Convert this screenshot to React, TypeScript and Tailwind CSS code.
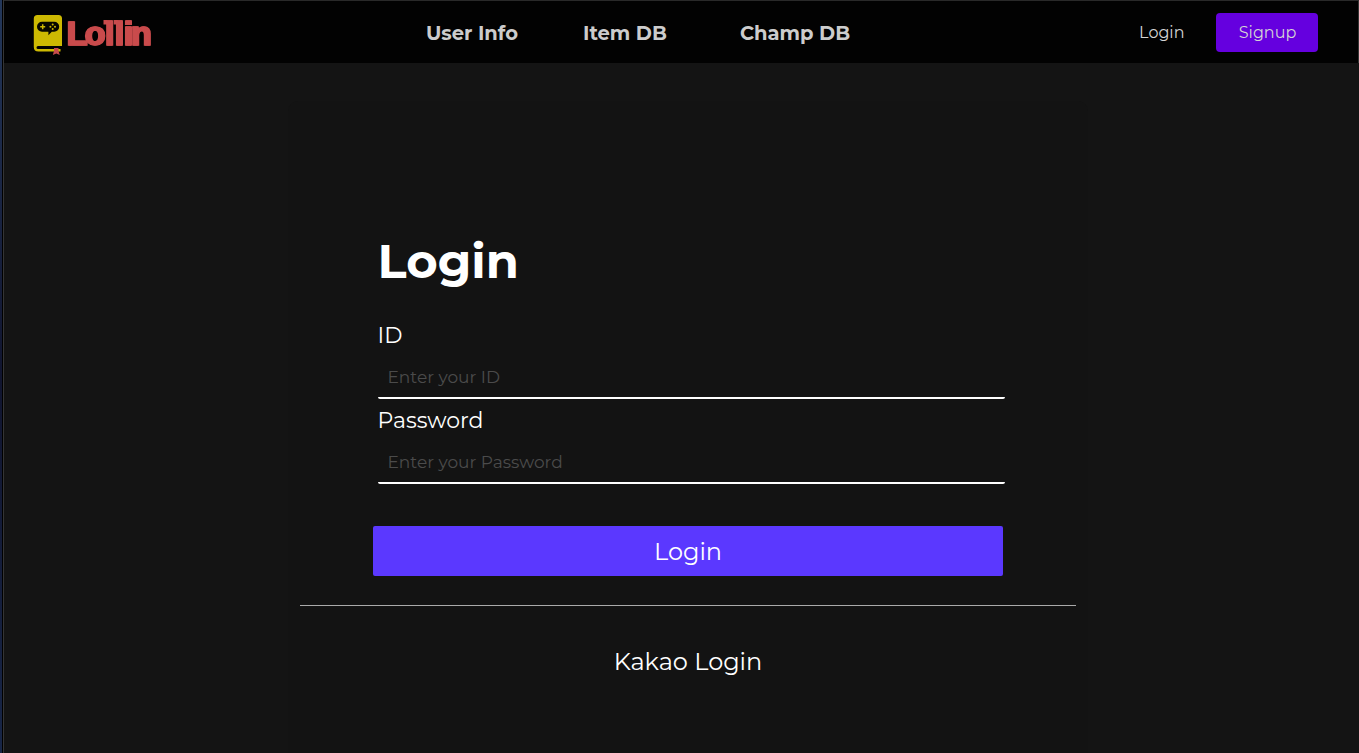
import type { ReactNode } from "react";

function Logo() {
  return (
    <svg width="124" height="46" viewBox="30 11 124 46" role="img" aria-label="Lollin" className="mt-[3px]">
      <path
        fill="#cdb902"
        d="M37.500 15H58.500q3.500 0 3.500 3.500V46H38q-1.500 0-1.500 1.500T38 49H60.500v2.600H38.500q-4.700 0-4.700-4.600V18.500q0-3.500 3.700-3.500Z"
      />
      <path
        fill="#080800"
        d="M42 21.800h12.200a5 5 0 0 1 0 10h-2.400l-3.400 3.400v-3.400H42a5 5 0 0 1 0-10Z"
      />
      <path stroke="#cdb902" strokeWidth="1.500" d="M40.200 26.800h5M42.700 24.300v5" />
      <g fill="#cdb902">
        <circle cx="52.700" cy="24.500" r="1" />
        <circle cx="52.700" cy="29.100" r="1" />
        <circle cx="50.400" cy="26.800" r="1" />
        <circle cx="55" cy="26.800" r="1" />
      </g>
      <path fill="#c94b4c" d="M54 48h4.500v3l1.300 4-3.500-1.500-3.500 1.500 1.200-4Z" />
      <g
        fill="#c94b4c"
        stroke="#c94b4c"
        strokeWidth="1.400"
        strokeLinejoin="miter"
        className="font-['Liberation_Sans_Narrow','Liberation_Sans',sans-serif] font-bold [filter:drop-shadow(1.2px_0_0_#c94b4c)]"
        transform="translate(0 45)"
      >
        <text fontSize="34" x="66.300 84.200 104.600 114.200 123.200 130.500">Lollin</text>
      </g>
      <path fill="#c94b4c" d="M103.500 20h4v4.500h-4ZM113.700 20h4v4.500h-4Z" />
    </svg>
  );
}

function Field({ label, type, placeholder }: { label: string; type: string; placeholder: string }) {
  return (
    <label className="block h-[85px] w-[627px]">
      <span className="block h-[37px] pt-px text-[22px] leading-[30px]">{label}</span>
      <input
        type={type}
        placeholder={placeholder}
        className="block h-[42px] w-full rounded-[2px] border-b-2 border-white bg-transparent px-2.5 pb-px text-[17px] outline-none placeholder:text-[#4b4b4b]"
      />
    </label>
  );
}

function NavItem({ children, className }: { children: ReactNode; className: string }) {
  return (
    <a href="#" className={className}>
      {children}
    </a>
  );
}

export default function App() {
  return (
    <div className="flex h-[753px] w-full overflow-hidden bg-[#141414] font-['Montserrat','Inter',sans-serif] font-normal text-white">
      <div className="w-[2px] shrink-0 bg-linear-to-b from-[#24385b] via-[#11152f] to-[#182647]" />
      <div className="w-px shrink-0 bg-black" />
      <div className="flex min-w-0 flex-1 flex-col border-l border-[#353535]">
        <header className="flex h-[63px] shrink-0 items-center border-t border-r border-t-[#292929] border-r-[#363636] bg-[#020202] pl-[26px]">
          <div className="w-[396px]">
            <Logo />
          </div>
          <nav className="flex flex-1 items-center pt-px text-[19.5px] leading-6 font-bold text-[#cccccc]">
            <NavItem className="w-[157px]">User Info</NavItem>
            <NavItem className="w-[157px]">Item DB</NavItem>
            <NavItem className="w-[157px]">Champ DB</NavItem>
          </nav>
          <div className="flex items-center pr-10 text-base text-[#d4d4d4]">
            <a href="#" className="mr-[31.5px] pt-0.5">Login</a>
            <a href="#" className="flex h-[39px] w-[102px] items-center justify-center rounded-[4px] bg-[#6500df] pt-0.5 pl-px">
              Signup
            </a>
          </div>
        </header>
        <main className="flex flex-1 flex-col pt-[38px] pl-[284px]">
          <section className="flex w-[800px] flex-1 flex-col rounded-t-[10px] bg-[#131313]">
            <form className="pt-[130px] pl-[85px]">
              <div className="pl-[4.5px]">
                <h1 className="h-[89px] text-[48px] leading-[60px] font-bold">Login</h1>
                <Field label="ID" type="text" placeholder="Enter your ID" />
                <Field label="Password" type="password" placeholder="Enter your Password" />
              </div>
              <button type="button" className="mt-9 block h-[50px] w-[630px] rounded-[2px] bg-[#5b38ff] pt-0.5 text-2xl">
                Login
              </button>
            </form>
            <hr className="mt-[29px] ml-3 w-[776px] border-[#aaaaaa]" />
            <button type="button" className="mt-9 h-10 text-2xl">Kakao Login</button>
          </section>
        </main>
      </div>
    </div>
  );
}
